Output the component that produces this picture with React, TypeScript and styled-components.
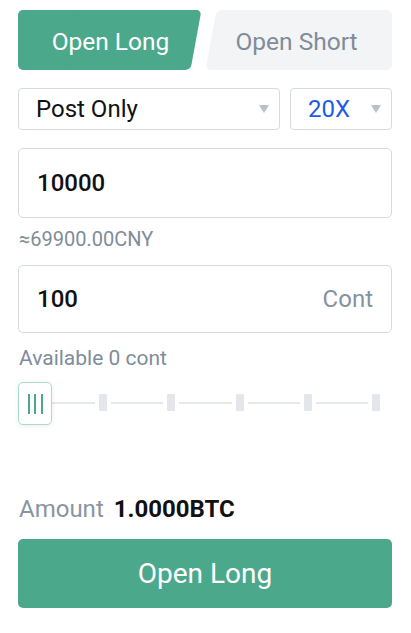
import React from "react";
import styled, { createGlobalStyle } from "styled-components";

const Global = createGlobalStyle`
  html, body { margin: 0; padding: 0; background: #fff; }
  body { font-family: Roboto, "Noto Sans", "Liberation Sans", sans-serif; -webkit-font-smoothing: antialiased; }
  * { box-sizing: border-box; }
`;

const GREEN = "#4ba88b";
const MUTED = "#7f8c9a";
const BORDER = "#d6dbe1";

const Page = styled.div`
  width: 411px;
  height: 633px;
  padding: 10px 19px 0 18px;
  display: flex;
  flex-direction: column;
`;

const TabRow = styled.div`
  display: flex;
  gap: 15px;
  height: 60px;
`;

const Tab = styled.div<{ $active?: boolean; $side: "left" | "right" }>`
  position: relative;
  flex: 1;
  display: flex;
  align-items: center;
  justify-content: center;
  padding-top: 2px;
  padding-left: ${(p) => (p.$side === "left" ? "7px" : "0")};
  padding-right: ${(p) => (p.$side === "right" ? "10px" : "0")};
  font-size: 24.5px;
  font-weight: 400;
  color: ${(p) => (p.$active ? "#fff" : "#808c99")};
  isolation: isolate;
  &::before,
  &::after {
    content: "";
    position: absolute;
    top: 0;
    bottom: 0;
    z-index: -1;
    background: ${(p) => (p.$active ? GREEN : "#f3f4f6")};
  }
  &::before {
    ${(p) => (p.$side === "left" ? "left: 0; right: 40%;" : "left: 40%; right: 0;")}
    border-radius: ${(p) => (p.$side === "left" ? "5px 0 0 5px" : "0 5px 5px 0")};
  }
  &::after {
    ${(p) => (p.$side === "left" ? "left: 30%; right: 0;" : "left: 0; right: 30%;")}
    border-radius: 5px;
    transform: skewX(-10.4deg);
  }
`;

const SelectRow = styled.div`
  display: flex;
  gap: 10px;
  margin-top: 18px;
  height: 42px;
`;

const Select = styled.div<{ $width?: number; $blue?: boolean }>`
  ${(p) => (p.$width ? `width: ${p.$width}px; flex: none;` : "flex: 1;")}
  border: 1px solid ${BORDER};
  border-radius: 4px;
  display: flex;
  align-items: center;
  justify-content: space-between;
  padding: 0 10px 0 17px;
  font-size: 24px;
  color: ${(p) => (p.$blue ? "#1d5ce6" : "#111")};
`;

const Caret = styled.span`
  width: 0;
  height: 0;
  border-left: 5.5px solid transparent;
  border-right: 5.5px solid transparent;
  border-top: 8px solid #b9c0c8;
`;

const Field = styled.div<{ $height: number; $top: number }>`
  margin-top: ${(p) => p.$top}px;
  height: ${(p) => p.$height}px;
  border: 1px solid ${BORDER};
  border-radius: 5px;
  display: flex;
  align-items: center;
  justify-content: space-between;
  padding: 0 18px 0 18px;
`;

const Value = styled.span`
  font-size: 24px;
  font-weight: 500;
  color: #111;
`;

const Unit = styled.span`
  font-size: 24px;
  color: #8592a0;
`;

const Hint = styled.div<{ $top: number; $size: number }>`
  margin-top: ${(p) => p.$top}px;
  font-size: ${(p) => p.$size}px;
  line-height: 26px;
  color: ${MUTED};
  padding-left: 1px;
`;

const Slider = styled.div`
  position: relative;
  margin-top: 11px;
  height: 43px;
`;

const Track = styled.div`
  position: absolute;
  left: 17px;
  right: 16px;
  top: 20px;
  height: 2px;
  background: #e6e9ec;
`;

const Tick = styled.div`
  position: absolute;
  top: -8px;
  width: 8px;
  height: 17px;
  margin-left: -4px;
  background: #e3e6ea;
  border-radius: 1px;
  box-shadow: 0 0 0 4px #fff;
`;

const Handle = styled.div`
  position: absolute;
  left: 0;
  top: 0;
  width: 34px;
  height: 43px;
  background: #fff;
  border: 1.5px solid #a9dcc9;
  border-radius: 5px;
  box-shadow: 0 1px 5px rgba(0, 0, 0, 0.08);
  display: flex;
  align-items: center;
  justify-content: center;
  gap: 4.5px;
`;

const Grip = styled.span`
  width: 2px;
  height: 20px;
  background: ${GREEN};
`;

const AmountRow = styled.div`
  margin-top: 69px;
  display: flex;
  align-items: baseline;
  gap: 10px;
  line-height: 30px;
  font-size: 24px;
  padding-left: 1px;
`;

const AmountLabel = styled.span`
  color: #8895a3;
`;

const AmountValue = styled.span`
  font-weight: 700;
  color: #111;
`;

const Submit = styled.button`
  margin-top: 15px;
  height: 69px;
  width: 100%;
  border: none;
  border-radius: 5px;
  background: ${GREEN};
  color: #fff;
  font-family: inherit;
  font-size: 28px;
  font-weight: 400;
  padding: 0;
`;

export default function App() {
  const ticks = [20, 40, 60, 80, 100];
  return (
    <>
      <Global />
      <Page>
        <TabRow>
          <Tab $active $side="left">Open Long</Tab>
          <Tab $side="right">Open Short</Tab>
        </TabRow>
        <SelectRow>
          <Select>
            Post Only
            <Caret />
          </Select>
          <Select $width={102} $blue>
            20X
            <Caret />
          </Select>
        </SelectRow>
        <Field $height={70} $top={18}>
          <Value>10000</Value>
        </Field>
        <Hint $top={8} $size={20}>≈69900.00CNY</Hint>
        <Field $height={68} $top={13}>
          <Value>100</Value>
          <Unit>Cont</Unit>
        </Field>
        <Hint $top={12} $size={21}>Available 0 cont</Hint>
        <Slider>
          <Track>
            {ticks.map((t) => (
              <Tick key={t} style={{ left: `${t}%` }} />
            ))}
          </Track>
          <Handle>
            <Grip />
            <Grip />
            <Grip />
          </Handle>
        </Slider>
        <AmountRow>
          <AmountLabel>Amount</AmountLabel>
          <AmountValue>1.0000BTC</AmountValue>
        </AmountRow>
        <Submit>Open Long</Submit>
      </Page>
    </>
  );
}
